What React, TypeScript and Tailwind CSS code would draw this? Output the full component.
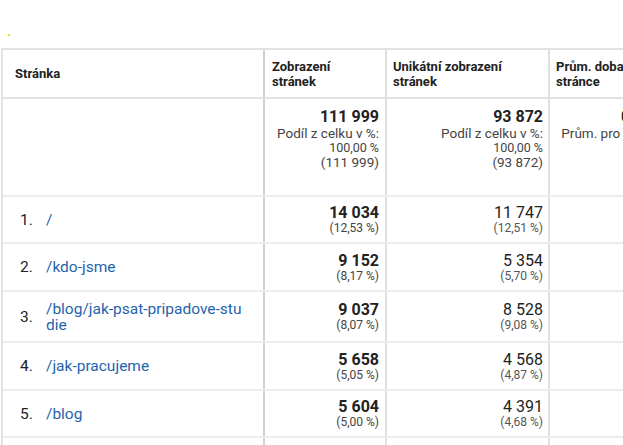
import React from 'react'

const rows = [
  { n: 1, page: '/', views: '14 034', viewsPct: '(12,53 %)', uniq: '11 747', uniqPct: '(12,51 %)', h: 'h-[47px]' },
  { n: 2, page: '/kdo-jsme', views: '9 152', viewsPct: '(8,17 %)', uniq: '5 354', uniqPct: '(5,70 %)', h: 'h-[48px]' },
  { n: 3, page: '/blog/jak-psat-pripadove-studie', views: '9 037', viewsPct: '(8,07 %)', uniq: '8 528', uniqPct: '(9,08 %)', h: 'h-[51px]' },
  { n: 4, page: '/jak-pracujeme', views: '5 658', viewsPct: '(5,05 %)', uniq: '4 568', uniqPct: '(4,87 %)', h: 'h-[48px]' },
  { n: 5, page: '/blog', views: '5 604', viewsPct: '(5,00 %)', uniq: '4 391', uniqPct: '(4,68 %)', h: 'h-[47px]' },
  { n: 6, page: '/kontakt', views: '4 210', viewsPct: '(3,76 %)', uniq: '3 902', uniqPct: '(4,16 %)', h: 'h-[47px]' },
]

const grid = 'grid grid-cols-[262px_122px_163px_141px]'

export default function App() {
  return (
    <div className="w-[623px] h-[445px] overflow-hidden bg-white text-[#222] font-['Roboto','Liberation_Sans',sans-serif] relative">
      {/* little yellow marker above the table */}
      <div className="absolute left-[8px] top-[34px] w-[2px] h-[2px] bg-[#e4e41a]" />

      <div className="ml-[1px] mt-[48px] w-[690px] border-t-2 border-l-2 border-[#e2e2e2]">
        {/* Header */}
        <div className={`${grid} h-[49px] border-b-2 border-[#e2e2e2] text-[13px] font-bold leading-[15px]`}>
          <div className="border-r-2 border-[#d2d2d2] flex items-center pl-[12px]">Stránka</div>
          <div className="border-r-2 border-[#e0e0e0] flex items-center pl-[7px]">Zobrazení<br />stránek</div>
          <div className="border-r-2 border-[#e0e0e0] flex items-center pl-[6px]">Unikátní zobrazení<br />stránek</div>
          <div className="flex items-center pl-[6px] whitespace-nowrap">Prům. doba na<br />stránce</div>
        </div>

        {/* Totals */}
        <div className={`${grid} h-[98px] border-b-2 border-[#ececec]`}>
          <div className="border-r-2 border-[#d2d2d2]" />
          <div className="border-r-2 border-[#e0e0e0] pt-[8px] pr-[6px] text-right">
            <div className="text-[16px] font-bold leading-[19px]">111 999</div>
            <div className="text-[13.5px] leading-[14px] text-[#444]">Podíl z celku v %:</div>
            <div className="text-[12.5px] leading-[15px] text-[#444]">100,00 %</div>
            <div className="text-[13.5px] leading-[15px] text-[#444]">(111 999)</div>
          </div>
          <div className="border-r-2 border-[#e0e0e0] pt-[8px] pr-[5px] text-right">
            <div className="text-[16px] font-bold leading-[19px]">93 872</div>
            <div className="text-[13.5px] leading-[14px] text-[#444]">Podíl z celku v %:</div>
            <div className="text-[12.5px] leading-[15px] text-[#444]">100,00 %</div>
            <div className="text-[13.5px] leading-[15px] text-[#444]">(93 872)</div>
          </div>
          <div className="pt-[8px] pr-[6px] text-right whitespace-nowrap">
            <div className="text-[16px] font-bold leading-[19px]">00:00:58</div>
            <div className="text-[13.5px] leading-[14px] text-[#444]">Prům. pro zobrazení:</div>
            <div className="text-[12.5px] leading-[15px] text-[#444]">00:00:58</div>
            <div className="text-[13.5px] leading-[15px] text-[#444]">(0,00 %)</div>
          </div>
        </div>

        {/* Rows */}
        {rows.map((r) => (
          <div key={r.n} className={`${grid} ${r.h} border-b-2 border-[#ececec]`}>
            <div className="border-r-2 border-[#d2d2d2] flex items-center pl-[17px] pr-[17px] text-[15.5px] leading-[16px]">
              <span className="w-[26px] shrink-0">{r.n}.</span>
              <span className="text-[#1f64ad] break-all">{r.page}</span>
            </div>
            <div className="border-r-2 border-[#e0e0e0] flex flex-col justify-center items-end pr-[6px]">
              <span className="text-[16px] font-bold leading-[17px]">{r.views}</span>
              <span className="text-[12px] leading-[14px] text-[#444]">{r.viewsPct}</span>
            </div>
            <div className="border-r-2 border-[#e0e0e0] flex flex-col justify-center items-end pr-[5px]">
              <span className="text-[16px] leading-[17px]">{r.uniq}</span>
              <span className="text-[12px] leading-[14px] text-[#555]">{r.uniqPct}</span>
            </div>
            <div />
          </div>
        ))}
      </div>
    </div>
  )
}
